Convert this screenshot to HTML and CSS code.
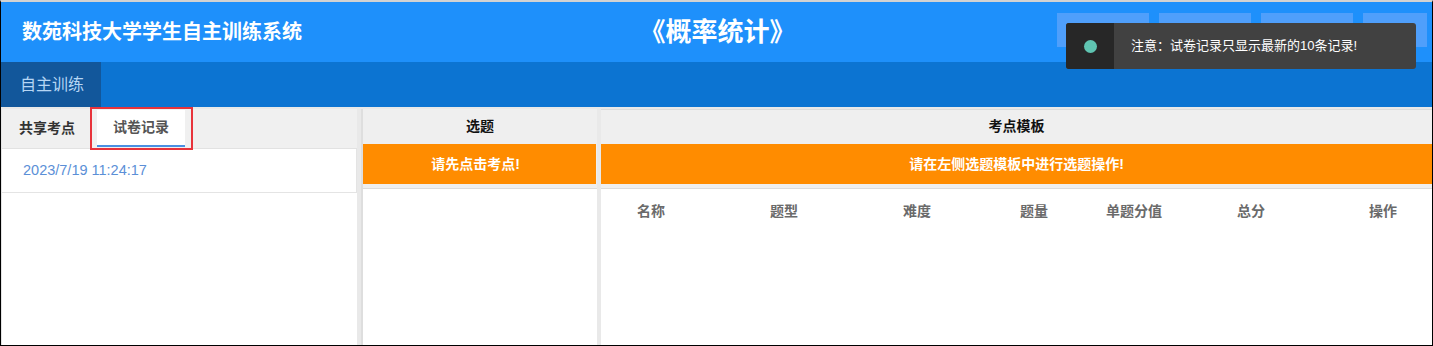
FILE: index.html
```html
<!DOCTYPE html>
<html lang="zh-CN">
<head>
<meta charset="utf-8">
<title>数苑科技大学学生自主训练系统</title>
<link rel="stylesheet" href="styles.css">
</head>
<body>
<div class="frame">
  <header class="topbar">
    <h1 class="sys-title">数苑科技大学学生自主训练系统</h1>
    <div class="course">《概率统计》</div>
    <div class="top-btns">
      <span class="tbtn"></span>
      <span class="tbtn"></span>
      <span class="tbtn"></span>
      <span class="tbtn short"></span>
    </div>
  </header>
  <nav class="nav">
    <a class="nav-item active">自主训练</a>
  </nav>
  <main class="content">
    <section class="panel left">
      <div class="tabs">
        <div class="tab first">共享考点</div>
        <div class="tab active">试卷记录</div>
      </div>
      <div class="record">2023/7/19 11:24:17</div>
    </section>
    <section class="panel mid">
      <div class="phead">
        <div class="ph">选题</div>
        <div class="notice">请先点击考点!</div>
      </div>
    </section>
    <section class="panel right">
      <div class="phead">
        <div class="ph">考点模板</div>
        <div class="notice">请在左侧选题模板中进行选题操作!</div>
      </div>
      <div class="thead">
        <span>名称</span><span>题型</span><span>难度</span><span>题量</span><span>单题分值</span><span>总分</span><span>操作</span>
      </div>
    </section>
  </main>
  <div class="toast">
    <div class="toast-icon"><span class="dot"></span></div>
    <div class="toast-msg">注意：试卷记录只显示最新的10条记录!</div>
  </div>
</div>
</body>
</html>
```
FILE: styles.css
```css
* { box-sizing: border-box; }
html, body { margin: 0; padding: 0; background: #fff; }
body {
  font-family: "Liberation Sans", "Noto Sans CJK SC", sans-serif;
}
.frame {
  position: relative;
  width: 1433px;
  height: 346px;
  border-left: 1px solid #000;
  border-right: 1px solid #000;
  border-bottom: 1px solid #000;
  border-top: 2px solid #d2d2d2;
  overflow: hidden;
  display: flex;
  flex-direction: column;
}
.topbar {
  height: 60px;
  flex: none;
  background: #1e90fb;
  display: grid;
  grid-template-columns: 1fr auto 1fr;
  align-items: center;
  color: #fff;
}
.sys-title {
  margin: 0;
  padding-left: 21px;
  font-size: 20px;
  font-weight: bold;
  line-height: 60px;
}
.course {
  font-size: 26px;
  font-weight: bold;
  line-height: 60px;
  padding-left: 2px;
}
.top-btns {
  justify-self: end;
  align-self: start;
  margin-top: 11px;
  margin-right: 5px;
  display: flex;
  gap: 10px;
}
.tbtn {
  display: block;
  width: 92px;
  height: 34px;
  background: #4f9ffb;
}
.tbtn.short { width: 64px; }
.nav {
  height: 45px;
  flex: none;
  background: #0c74d2;
  display: flex;
}
.nav-item {
  display: block;
  width: 100px;
  height: 45px;
  line-height: 45px;
  padding-left: 19px;
  font-size: 16px;
  color: #b6d6f4;
}
.nav-item.active { background: #12579b; }
.content {
  flex: 1;
  display: flex;
  gap: 4px;
  padding-top: 2px;
  background: #e9e9e9;
  min-height: 0;
}
.panel { background: #fff; height: 100%; }
.panel.left { width: 356px; flex: none; border-left: 1px solid #e4e4e4; }
.tabs {
  height: 40px;
  background: #f0f0f0;
  border-bottom: 1px solid #e2e2e2;
  display: flex;
  padding-top: 1px;
}
.tab {
  position: relative;
  height: 37px;
  line-height: 37px;
  padding: 0 16px;
  font-size: 14px;
  font-weight: bold;
  color: #333;
}
.tab.first { padding-left: 17px; padding-right: 22px; }
.tab.active {
  background: #fff;
  color: #555;
  border-bottom: 2px solid #4a90e2;
  line-height: 35px;
}
.tab.active::after {
  content: "";
  position: absolute;
  left: -7px;
  right: -8px;
  top: -3px;
  bottom: -5px;
  border: 2px solid #e8333b;
  pointer-events: none;
}
.record {
  height: 44px;
  line-height: 43px;
  padding-left: 21px;
  font-size: 14.5px;
  color: #5b8fd7;
  border-bottom: 1px solid #e4e4e4;
  border-right: 1px solid #e4e4e4;
}
.panel.mid { width: 236px; flex: none; border-left: 2px solid #dedede; }
.panel.right { flex: 1; border-top: 1px solid #dcdcdc; }
.phead {
  background: #efefef;
  padding-bottom: 4px;
  border-bottom: 1px solid #dcdcdc;
}
.ph {
  height: 35px;
  line-height: 35px;
  text-align: center;
  font-size: 14px;
  font-weight: bold;
  color: #111;
}
.panel.right .ph { height: 34px; line-height: 33px; }
.notice {
  height: 40px;
  line-height: 40px;
  background: #ff8c00;
  color: #fff;
  text-align: center;
  font-size: 14px;
  font-weight: bold;
}
.panel.mid .notice { margin-right: 1px; padding-right: 8px; }
.thead {
  display: grid;
  grid-template-columns: 133px 133px 117px 86px 131px 132px 1fr;
  padding-left: 36px;
  padding-top: 12px;
  font-size: 14px;
  font-weight: bold;
  color: #6a6a6a;
  line-height: 20px;
}
.toast {
  position: absolute;
  top: 21px;
  left: 1065px;
  width: 350px;
  height: 46px;
  display: flex;
  border-radius: 3px;
  overflow: hidden;
  background: #414141;
}
.toast-icon {
  width: 48px;
  background: #272727;
  display: flex;
  align-items: center;
  justify-content: center;
}
.dot {
  width: 13px;
  height: 13px;
  border-radius: 50%;
  background: #5fc4b1;
}
.toast-msg {
  padding-left: 17px;
  line-height: 46px;
  font-size: 13px;
  color: #fff;
}
```
